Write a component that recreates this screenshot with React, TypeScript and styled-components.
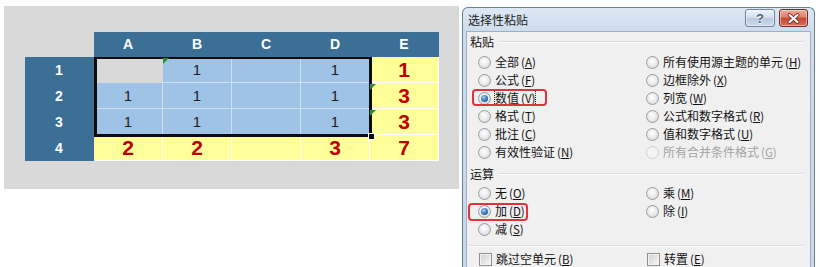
import React from 'react';
import styled, { createGlobalStyle } from 'styled-components';

const Global = createGlobalStyle`
  html, body { margin: 0; padding: 0; background: #ffffff; }
  body { font-family: "Liberation Sans", Arial, sans-serif; }
`;

const Page = styled.div`
  display: flex;
  align-items: flex-start;
  width: 820px;
  height: 267px;
  overflow: hidden;
  padding: 6px 0 0 4px;
  box-sizing: border-box;
`;

/* ---------------- spreadsheet ---------------- */

const SheetPanel = styled.div`
  width: 455px;
  height: 183px;
  flex: none;
  background: #d9d9d9;
  padding: 26px 0 0 21px;
  box-sizing: border-box;
`;

const Grid = styled.div`
  position: relative;
  display: grid;
  grid-template-columns: repeat(6, 69px);
  grid-template-rows: 25px repeat(4, 26px);
  width: max-content;
`;

type CellKind = 'corner' | 'head' | 'blue' | 'gray' | 'yellow';

const cellBg: Record<CellKind, string> = {
  corner: 'transparent',
  head: '#3b6f96',
  blue: '#9fc3e7',
  gray: '#d9d9d9',
  yellow: '#ffff99',
};

const cellLine: Record<CellKind, string> = {
  corner: 'transparent',
  head: '#3b6f96',
  blue: '#cfe0f2',
  gray: '#d9d9d9',
  yellow: '#ffffff',
};

const Cell = styled.div<{ $kind: CellKind; $red?: boolean; $flag?: boolean }>`
  position: relative;
  box-sizing: border-box;
  display: flex;
  align-items: center;
  justify-content: center;
  background: ${(p) => cellBg[p.$kind]};
  border-right: 1px solid ${(p) => cellLine[p.$kind]};
  border-bottom: 1px solid ${(p) => cellLine[p.$kind]};
  color: ${(p) => (p.$kind === 'head' ? '#ffffff' : p.$red ? '#c00000' : '#1e1e1e')};
  font-family: "Liberation Sans", Arial, sans-serif;
  font-weight: ${(p) => (p.$kind === 'head' || p.$red ? 700 : 400)};
  font-size: ${(p) => (p.$kind === 'head' ? '14px' : p.$red ? '21px' : '15px')};
  line-height: 1;
  &::before {
    content: '';
    display: ${(p) => (p.$flag ? 'block' : 'none')};
    position: absolute;
    left: 0;
    top: 1px;
    width: 0;
    height: 0;
    border-top: 6px solid #2f8a3c;
    border-right: 6px solid transparent;
    z-index: 3;
  }
`;

const Selection = styled.div`
  position: absolute;
  left: 69px;
  top: 25px;
  width: 278px;
  height: 80px;
  box-sizing: border-box;
  border: 3px solid #0d0d0d;
  border-top-width: 2px;
  pointer-events: none;
  z-index: 2;
`;

const FillHandle = styled.div`
  position: absolute;
  left: 343px;
  top: 101px;
  width: 5px;
  height: 5px;
  background: #0d0d0d;
  border: 1px solid #ffffff;
  z-index: 3;
`;

type CellDef = { k: CellKind; v?: string; red?: boolean; flag?: boolean };

const rows: CellDef[][] = [
  [
    { k: 'corner' },
    { k: 'head', v: 'A' },
    { k: 'head', v: 'B' },
    { k: 'head', v: 'C' },
    { k: 'head', v: 'D' },
    { k: 'head', v: 'E' },
  ],
  [
    { k: 'head', v: '1' },
    { k: 'gray' },
    { k: 'blue', v: '1', flag: true },
    { k: 'blue' },
    { k: 'blue', v: '1' },
    { k: 'yellow', v: '1', red: true },
  ],
  [
    { k: 'head', v: '2' },
    { k: 'blue', v: '1' },
    { k: 'blue', v: '1' },
    { k: 'blue' },
    { k: 'blue', v: '1' },
    { k: 'yellow', v: '3', red: true, flag: true },
  ],
  [
    { k: 'head', v: '3' },
    { k: 'blue', v: '1' },
    { k: 'blue', v: '1' },
    { k: 'blue' },
    { k: 'blue', v: '1' },
    { k: 'yellow', v: '3', red: true, flag: true },
  ],
  [
    { k: 'head', v: '4' },
    { k: 'yellow', v: '2', red: true },
    { k: 'yellow', v: '2', red: true },
    { k: 'yellow' },
    { k: 'yellow', v: '3', red: true },
    { k: 'yellow', v: '7', red: true },
  ],
];

/* ---------------- dialog ---------------- */

const Dialog = styled.div`
  flex: none;
  margin: 1px 0 0 3px;
  width: 353px;
  height: 262px;
  box-sizing: border-box;
  border: 1px solid #6c7e93;
  border-bottom: none;
  border-radius: 6px 6px 0 0;
  background: linear-gradient(#dde8f4, #cddcee 24px, #c6d8ec);
  padding: 0 3px;
  display: flex;
  flex-direction: column;
`;

const TitleBar = styled.div`
  height: 23px;
  flex: none;
  display: flex;
  align-items: flex-start;
  justify-content: space-between;
  padding: 0 3px 0 2px;
`;

const Title = styled.span`
  font-family: "Noto Sans CJK SC", "Noto Sans", sans-serif;
  font-size: 12px;
  line-height: 23px;
  color: #1b1b1b;
`;

const TitleButtons = styled.div`
  display: flex;
  gap: 4px;
  padding-top: 1px;
`;

const CaptionButton = styled.div<{ $close?: boolean }>`
  width: ${(p) => (p.$close ? '29px' : '30px')};
  height: 18px;
  box-sizing: border-box;
  border-radius: 3px;
  border: 1px solid ${(p) => (p.$close ? '#6e2c24' : '#6f8297')};
  background: ${(p) =>
    p.$close
      ? 'linear-gradient(#e8ab99, #da8570 45%, #c5452f 50%, #d5735a)'
      : 'linear-gradient(#eef3f9, #d3dfec 48%, #b9cbe0 52%, #cbdaec)'};
  box-shadow: inset 0 0 0 1px rgba(255, 255, 255, 0.45);
  display: flex;
  align-items: center;
  justify-content: center;
  font-family: "Liberation Sans", Arial, sans-serif;
  font-size: 13px;
  font-weight: 700;
  color: #4d6178;
  text-shadow: 0 1px 0 #ffffff;
`;

const Body = styled.div`
  flex: 1;
  background: #f0f0f0;
  border: 1px solid #9fb0c4;
  border-bottom: none;
  display: flex;
  flex-direction: column;
  font-family: "Noto Sans CJK SC", "Noto Sans", sans-serif;
  font-size: 12px;
  color: #111111;
`;

const GroupHeader = styled.div<{ $top: number }>`
  display: flex;
  align-items: center;
  gap: 4px;
  height: 16px;
  margin: ${(p) => p.$top}px 7px 0 3px;
  line-height: 16px;
`;

const GroupLine = styled.div`
  flex: 1;
  height: 0;
  border-top: 1px solid #d5dbe2;
  border-bottom: 1px solid #ffffff;
`;

const OptionGrid = styled.div<{ $top: number }>`
  display: grid;
  grid-template-columns: 168px 1fr;
  grid-auto-rows: 18px;
  margin: ${(p) => p.$top}px 0 0 11px;
`;

const Option = styled.div<{ $disabled?: boolean }>`
  position: relative;
  display: flex;
  align-items: center;
  gap: 4px;
  color: ${(p) => (p.$disabled ? '#a3a3a3' : '#111111')};
  white-space: nowrap;
`;

const Radio = styled.span<{ $checked?: boolean; $disabled?: boolean }>`
  position: relative;
  flex: none;
  width: 13px;
  height: 13px;
  box-sizing: border-box;
  border-radius: 50%;
  border: 1px solid ${(p) => (p.$disabled ? '#cfcfcf' : '#9b9b9b')};
  background: ${(p) =>
    p.$disabled
      ? '#f4f4f4'
      : 'radial-gradient(circle at 45% 40%, #ffffff 0%, #ececec 45%, #cfcfcf 100%)'};
  &::after {
    content: '';
    display: ${(p) => (p.$checked ? 'block' : 'none')};
    position: absolute;
    left: 2px;
    top: 2px;
    width: 7px;
    height: 7px;
    border-radius: 50%;
    background: radial-gradient(circle at 40% 35%, #a8d4f6 0%, #3b82c7 45%, #163f6e 100%);
  }
`;

const Check = styled.span`
  flex: none;
  width: 13px;
  height: 13px;
  box-sizing: border-box;
  border: 1px solid #8f8f8f;
  background: linear-gradient(135deg, #d2d2d2, #f6f6f6);
  box-shadow: inset 0 0 0 1px #f4f4f4;
`;

const Label = styled.span<{ $focus?: boolean }>`
  line-height: 16px;
  outline: ${(p) => (p.$focus ? '1px dotted #222222' : 'none')};
  outline-offset: -1px;
  padding: 0 1px;
  margin-left: -1px;
`;

const Key = styled.span`
  margin-left: 2px;
  font-size: 11.5px;
  & u { text-underline-offset: 1px; }
`;

const Highlight = styled.span<{ $l: number; $t: number; $w: number; $h: number }>`
  position: absolute;
  left: ${(p) => p.$l}px;
  top: ${(p) => p.$t}px;
  width: ${(p) => p.$w}px;
  height: ${(p) => p.$h}px;
  box-sizing: border-box;
  border: 2px solid #e2323c;
  border-radius: 4px;
  pointer-events: none;
`;

const Separator = styled.div`
  margin: 7px 7px 0 2px;
  border-top: 1px solid #d5dbe2;
  border-bottom: 1px solid #ffffff;
`;

const CheckRow = styled.div`
  display: grid;
  grid-template-columns: 168px 1fr;
  height: 16px;
  margin: 4px 0 0 12px;
`;

type Opt = {
  text: string;
  key: string;
  checked?: boolean;
  disabled?: boolean;
  focus?: boolean;
  hl?: { l: number; t: number; w: number; h: number };
};

const pasteOptions: Opt[] = [
  { text: '全部', key: 'A' },
  { text: '所有使用源主题的单元', key: 'H' },
  { text: '公式', key: 'F' },
  { text: '边框除外', key: 'X' },
  { text: '数值', key: 'V', checked: true, focus: true, hl: { l: -6, t: 0, w: 75, h: 17 } },
  { text: '列宽', key: 'W' },
  { text: '格式', key: 'T' },
  { text: '公式和数字格式', key: 'R' },
  { text: '批注', key: 'C' },
  { text: '值和数字格式', key: 'U' },
  { text: '有效性验证', key: 'N' },
  { text: '所有合并条件格式', key: 'G', disabled: true },
];

const opOptions: Opt[] = [
  { text: '无', key: 'O' },
  { text: '乘', key: 'M' },
  { text: '加', key: 'D', checked: true, hl: { l: -10, t: 1, w: 60, h: 18 } },
  { text: '除', key: 'I' },
  { text: '减', key: 'S' },
];

const OptionItem = ({ o }: { o: Opt }) => (
  <Option $disabled={o.disabled}>
    <Radio $checked={o.checked} $disabled={o.disabled} />
    <Label $focus={o.focus}>
      {o.text}
      <Key>
        (<u>{o.key}</u>)
      </Key>
    </Label>
    {o.hl && <Highlight $l={o.hl.l} $t={o.hl.t} $w={o.hl.w} $h={o.hl.h} />}
  </Option>
);

const CloseIcon = () => (
  <svg width="13" height="11" viewBox="0 0 13 11">
    <path d="M2.5 2 L10.5 9 M10.5 2 L2.5 9" stroke="#5a1f18" strokeWidth="3.6" strokeLinecap="round" />
    <path d="M2.5 2 L10.5 9 M10.5 2 L2.5 9" stroke="#ffffff" strokeWidth="2.2" strokeLinecap="round" />
  </svg>
);

export default function App() {
  return (
    <>
      <Global />
      <Page>
        <SheetPanel>
          <Grid>
            {rows.map((r, ri) =>
              r.map((c, ci) => (
                <Cell key={`${ri}-${ci}`} $kind={c.k} $red={c.red} $flag={c.flag}>
                  {c.v}
                </Cell>
              ))
            )}
            <Selection />
            <FillHandle />
          </Grid>
        </SheetPanel>

        <Dialog>
          <TitleBar>
            <Title>选择性粘贴</Title>
            <TitleButtons>
              <CaptionButton>?</CaptionButton>
              <CaptionButton $close>
                <CloseIcon />
              </CaptionButton>
            </TitleButtons>
          </TitleBar>
          <Body>
            <GroupHeader $top={2}>
              粘贴
              <GroupLine />
            </GroupHeader>
            <OptionGrid $top={3}>
              {pasteOptions.map((o) => (
                <OptionItem key={o.key} o={o} />
              ))}
            </OptionGrid>
            <GroupHeader $top={5}>
              运算
              <GroupLine />
            </GroupHeader>
            <OptionGrid $top={2}>
              {opOptions.map((o) => (
                <OptionItem key={o.key} o={o} />
              ))}
            </OptionGrid>
            <Separator />
            <CheckRow>
              <Option>
                <Check />
                <Label>
                  跳过空单元<Key>(<u>B</u>)</Key>
                </Label>
              </Option>
              <Option>
                <Check />
                <Label>
                  转置<Key>(<u>E</u>)</Key>
                </Label>
              </Option>
            </CheckRow>
          </Body>
        </Dialog>
      </Page>
    </>
  );
}
